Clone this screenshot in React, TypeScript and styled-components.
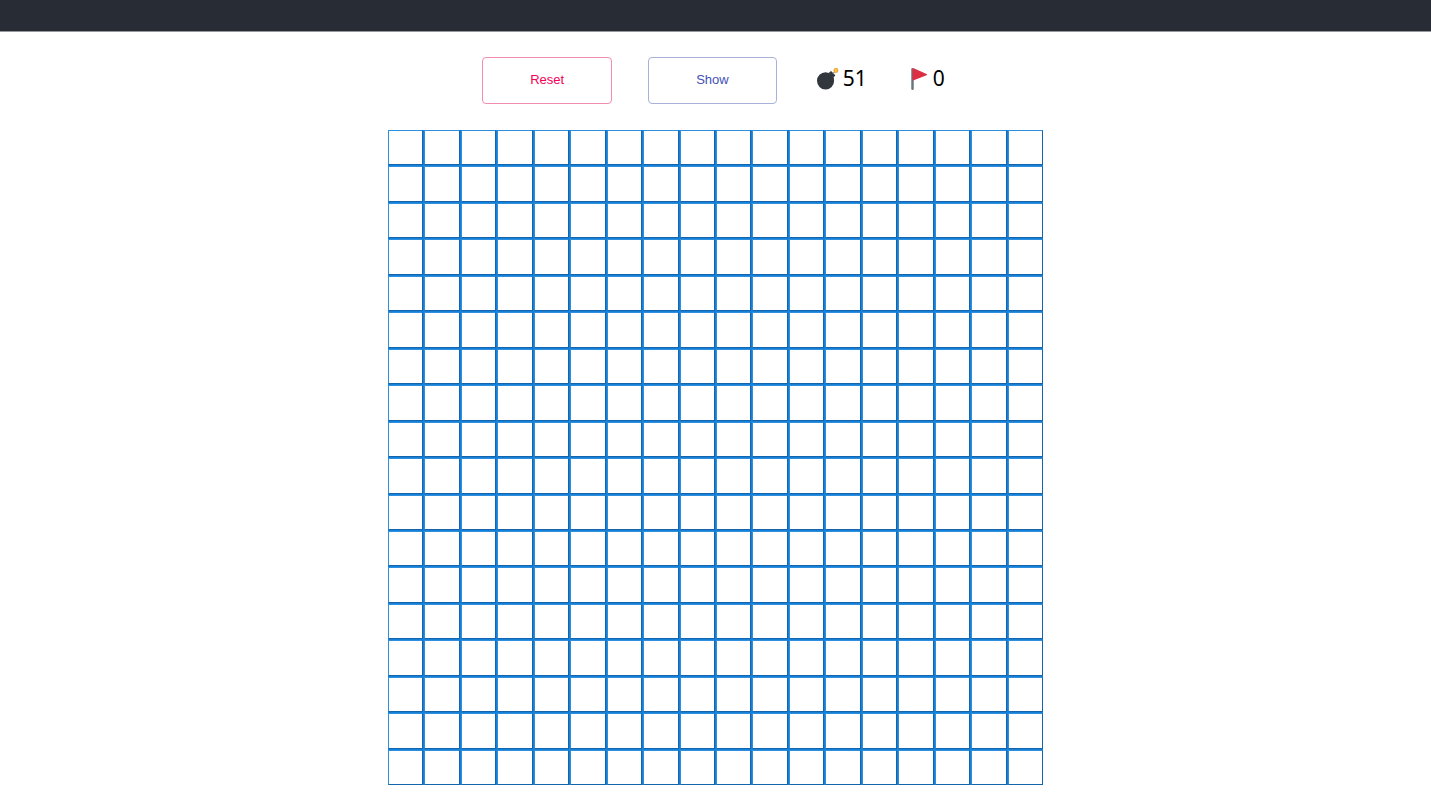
import React, { useState } from "react";
import styled, { createGlobalStyle } from "styled-components";

const GlobalStyle = createGlobalStyle`
  * { box-sizing: border-box; }
  body {
    margin: 0;
    background: #fff;
    color: #000;
    font-family: "Liberation Sans", Arial, sans-serif;
  }
`;

const TopBar = styled.header`
  height: 32px;
  background: #282c34;
  border-bottom: 1px solid #96989e;
`;

const Main = styled.main`
  display: flex;
  flex-direction: column;
  align-items: center;
  padding: 25px 16px 24px;
`;

const Toolbar = styled.div`
  display: flex;
  align-items: center;
  justify-content: center;
  gap: 36px;
  margin-bottom: 26px;
  padding-right: 4px;
`;

const OutlinedButton = styled.button<{ $color: string; $border: string }>`
  height: 47px;
  padding: 0 47px 2px;
  border: 1px solid ${(p) => p.$border};
  border-radius: 4px;
  background: transparent;
  color: ${(p) => p.$color};
  font: 13px/20px "Liberation Sans", Arial, sans-serif;
  cursor: pointer;
`;

const Counter = styled.div`
  display: flex;
  align-items: center;
  gap: 4px;
  margin-left: 4px;
  padding-bottom: 4px;
  font: 21px/28px "Noto Sans", sans-serif;
`;

const Count = styled.span`
  padding-bottom: 2px;
`;

const Icon = styled.svg`
  width: 22px;
  height: 22px;
`;

const Board = styled.div`
  display: grid;
  grid-template-columns: repeat(18, 1fr);
  gap: 1px;
  width: 100%;
  max-width: 655px;
  background: #1480d8;
`;

const Cell = styled.button`
  aspect-ratio: 1;
  min-width: 0;
  padding: 0;
  border: 1px solid;
  border-color: #2f8fdf #1565ad #1565ad #2f8fdf;
  background: #fff;
`;

const BombIcon = () => (
  <Icon viewBox="0 0 36 36" aria-hidden="true">
    <circle cx="14" cy="21" r="14" fill="#31373d" />
    <path d="M19 8l4-3 7 7-3 4z" fill="#31373d" />
    <path d="M26 9l4-4" fill="none" stroke="#8899a6" strokeWidth="2" />
    <circle cx="31" cy="4" r="3" fill="#ffcc4d" stroke="#f4a02c" strokeWidth="2" />
  </Icon>
);

const FlagIcon = () => (
  <Icon viewBox="0 0 36 36" aria-hidden="true">
    <path d="M11 2v32a2 2 0 0 1-4 0V2a2 2 0 0 1 4 0z" fill="#66757f" />
    <path d="M9 1q1-1 3 0l20 9q2 1 0 2L9 21z" fill="#dd2e44" />
  </Icon>
);

const SIZE = 18;

export default function App() {
  const [flags, setFlags] = useState(0);

  return (
    <>
      <GlobalStyle />
      <TopBar />
      <Main>
        <Toolbar>
          <OutlinedButton type="button" $color="#f50057" $border="#f08db0" onClick={() => setFlags(0)}>
            Reset
          </OutlinedButton>
          <OutlinedButton type="button" $color="#3f51b5" $border="#a9b1da">
            Show
          </OutlinedButton>
          <Counter>
            <BombIcon />
            <Count>51</Count>
          </Counter>
          <Counter>
            <FlagIcon />
            <Count>{flags}</Count>
          </Counter>
        </Toolbar>
        <Board>
          {Array.from({ length: SIZE * SIZE }, (_, i) => (
            <Cell
              key={i}
              type="button"
              aria-label={`Row ${Math.floor(i / SIZE) + 1}, column ${(i % SIZE) + 1}`}
            />
          ))}
        </Board>
      </Main>
    </>
  );
}
